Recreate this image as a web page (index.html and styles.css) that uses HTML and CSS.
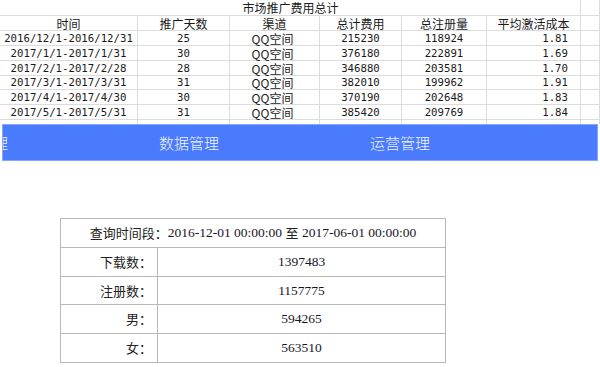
FILE: index.html
```html
<!DOCTYPE html>
<html lang="zh-CN">
<head>
<meta charset="utf-8">
<title>市场推广费用总计</title>
<link rel="stylesheet" href="styles.css">
</head>
<body>
<div class="sheet">
  <div class="cell title">市场推广费用总计</div><div class="cell"></div>

  <div class="cell head">时间</div><div class="cell head">推广天数</div><div class="cell head">渠道</div><div class="cell head">总计费用</div><div class="cell head">总注册量</div><div class="cell head">平均激活成本</div><div class="cell"></div>

  <div class="cell num">2016/12/1-2016/12/31</div><div class="cell num">25</div><div class="cell cn">QQ空间</div><div class="cell num">215230</div><div class="cell num">118924</div><div class="cell num right">1.81</div><div class="cell"></div>

  <div class="cell num">2017/1/1-2017/1/31</div><div class="cell num">30</div><div class="cell cn">QQ空间</div><div class="cell num">376180</div><div class="cell num">222891</div><div class="cell num right">1.69</div><div class="cell"></div>

  <div class="cell num">2017/2/1-2017/2/28</div><div class="cell num">28</div><div class="cell cn">QQ空间</div><div class="cell num">346880</div><div class="cell num">203581</div><div class="cell num right">1.70</div><div class="cell"></div>

  <div class="cell num">2017/3/1-2017/3/31</div><div class="cell num">31</div><div class="cell cn">QQ空间</div><div class="cell num">382010</div><div class="cell num">199962</div><div class="cell num right">1.91</div><div class="cell"></div>

  <div class="cell num">2017/4/1-2017/4/30</div><div class="cell num">30</div><div class="cell cn">QQ空间</div><div class="cell num">370190</div><div class="cell num">202648</div><div class="cell num right">1.83</div><div class="cell"></div>

  <div class="cell num">2017/5/1-2017/5/31</div><div class="cell num">31</div><div class="cell cn">QQ空间</div><div class="cell num">385420</div><div class="cell num">209769</div><div class="cell num right">1.84</div><div class="cell"></div>

  <div class="cell"></div><div class="cell"></div><div class="cell"></div><div class="cell"></div><div class="cell"></div><div class="cell"></div><div class="cell"></div>
</div>

<nav class="nav">
  <span class="nav-item">系统管理</span>
  <span class="nav-item">数据管理</span>
  <span class="nav-item">运营管理</span>
</nav>

<div class="stats">
  <div class="s-cell s-full"><span class="lbl">查询时间段：</span><span class="val">2016-12-01 00:00:00 </span><span class="lbl">至</span><span class="val"> 2017-06-01 00:00:00</span></div>
  <div class="s-cell s-label">下载数：</div><div class="s-cell s-value">1397483</div>
  <div class="s-cell s-label">注册数：</div><div class="s-cell s-value">1157775</div>
  <div class="s-cell s-label">男：</div><div class="s-cell s-value">594265</div>
  <div class="s-cell s-label">女：</div><div class="s-cell s-value">563510</div>
</div>
</body>
</html>
```

FILE: styles.css
```css
* { box-sizing: border-box; }

body {
  margin: 0;
  background: #ffffff;
  font-family: "Noto Sans CJK SC", sans-serif;
}

/* spreadsheet */
.sheet {
  display: grid;
  grid-template-columns: 138px 92px 90px 82px 85px 94px 19px;
  grid-template-rows: 16px 15px 15px 15px 15px 14px 15px 15px 15px;
  height: 124px;
  overflow: hidden;
  color: #1a1a1a;
}

.cell {
  border-right: 1px solid #dcdcdc;
  border-bottom: 1px solid #dcdcdc;
  display: flex;
  align-items: center;
  justify-content: center;
  white-space: nowrap;
  font-family: "Noto Sans CJK SC", sans-serif;
  font-size: 12px;
  line-height: 13px;
}

.title {
  grid-column: 1 / 7;
  padding-left: 1px;
}

.num {
  font-family: "DejaVu Sans Mono", "Noto Sans CJK SC", monospace;
  font-size: 10.7px;
}

.right {
  justify-content: flex-end;
  padding-right: 12px;
}

.cn {
  padding-right: 4px;
}

/* nav bar */
.nav {
  height: 37px;
  margin: 0 2px;
  background: #4a7bfd;
  border: 1px solid #86a6ff;
  display: flex;
  align-items: center;
  gap: 151px;
  overflow: hidden;
  color: #eef3ff;
  font-family: "Noto Sans CJK SC", sans-serif;
  font-weight: 300;
  font-size: 15px;
  line-height: 20px;
}

.nav-item {
  flex: none;
  white-space: nowrap;
}

.nav-item:first-child {
  margin-left: -55px;
}

/* stats table */
.stats {
  display: grid;
  grid-template-columns: 97px 288px;
  grid-template-rows: 29px 29px 28px 29px 29px;
  width: 386px;
  margin: 57px 0 0 60px;
  border-top: 1px solid #b8b8b8;
  border-left: 1px solid #b8b8b8;
}

.s-cell {
  border-right: 1px solid #b8b8b8;
  border-bottom: 1px solid #b8b8b8;
  display: flex;
  align-items: center;
  white-space: nowrap;
  line-height: 18px;
}

.s-full {
  grid-column: 1 / 3;
  justify-content: center;
}

.lbl {
  font-family: "Noto Sans CJK SC", sans-serif;
  font-size: 13px;
  color: #222222;
}

.val {
  font-family: "Liberation Serif", "Noto Sans CJK SC", serif;
  font-size: 13.5px;
  color: #161628;
  white-space: pre;
}

.s-label {
  justify-content: flex-end;
  padding-right: 5px;
  font-family: "Noto Sans CJK SC", sans-serif;
  font-size: 13px;
  color: #222222;
}

.s-value {
  justify-content: center;
  font-family: "Liberation Serif", serif;
  font-size: 13.5px;
  color: #161628;
}
```
